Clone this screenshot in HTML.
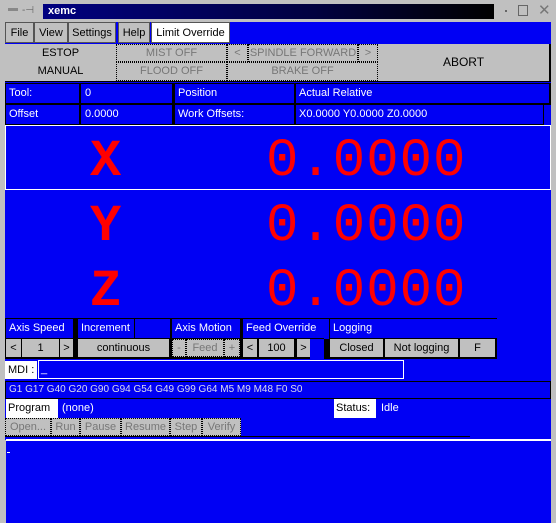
<!DOCTYPE html>
<html><head><style>
*{margin:0;padding:0;box-sizing:border-box}
body{width:556px;height:523px;background:#c0c0c0;position:relative;overflow:hidden;font-family:"Liberation Sans",sans-serif;font-size:11px}
.a{position:absolute;white-space:nowrap;overflow:hidden}
.b{background:#0000f4;color:#fff}
.g{background:#c0c0c0;color:#000;text-align:center}
.w{background:#fff;color:#000}
.d{border:1px dotted #000;color:#777}
.k{background:#000}
.m{font-family:"Liberation Mono",monospace;color:#f00;font-size:54px;line-height:54px;letter-spacing:1px}
.l{font-family:"Liberation Mono",monospace;font-weight:bold;color:#f00;font-size:52px;line-height:52px}
</style></head><body>
<div class="a" style="left:8px;top:8px;width:10px;height:3px;background:#888"></div>
<div class="a" style="left:22px;top:5px;font-size:10px;color:#666">-⊣</div>
<div class="a" style="left:43px;top:4px;width:451px;height:15px;background:linear-gradient(90deg,#000080,#000040 60%,#000);color:#fff;font-weight:bold;padding-left:5px;line-height:15px">xemc</div>
<div class="a" style="left:505px;top:10px;width:2px;height:2px;background:#666"></div>
<div class="a" style="left:518px;top:5px;width:10px;height:11px;border:1px solid #666"></div>
<div class="a" style="left:538px;top:1px;font-size:15px;color:#777">✕</div>

<div class="a b" style="left:5px;top:22px;width:546px;height:418px"></div>
<div class="a g" style="left:5px;top:22px;width:29px;height:21px;line-height:20px;border:1px solid #555">File</div>
<div class="a g" style="left:34px;top:22px;width:34px;height:21px;line-height:20px;border:1px solid #555">View</div>
<div class="a g" style="left:68px;top:22px;width:48px;height:21px;line-height:20px;border:1px solid #555">Settings</div>
<div class="a g" style="left:118px;top:22px;width:32px;height:21px;line-height:20px;border:1px solid #555">Help</div>
<div class="a w" style="left:151px;top:22px;width:79px;height:21px;line-height:20px;text-align:center;border:1px solid #555">Limit Override</div>

<div class="a k" style="left:5px;top:44px;width:546px;height:38px"></div>
<div class="a g" style="left:5px;top:44px;width:111px;height:18px;line-height:18px">ESTOP</div>
<div class="a g d" style="left:116px;top:44px;width:111px;height:18px;line-height:16px">MIST OFF</div>
<div class="a g d" style="left:227px;top:44px;width:21px;height:18px;line-height:16px">&lt;</div>
<div class="a g d" style="left:248px;top:44px;width:110px;height:18px;line-height:16px">SPINDLE FORWARD</div>
<div class="a g d" style="left:358px;top:44px;width:20px;height:18px;line-height:16px">&gt;</div>
<div class="a g" style="left:378px;top:44px;width:171px;height:37px;line-height:37px;font-size:12px">ABORT</div>
<div class="a g" style="left:5px;top:62px;width:111px;height:19px;line-height:19px">MANUAL</div>
<div class="a g d" style="left:116px;top:62px;width:111px;height:19px;line-height:17px">FLOOD OFF</div>
<div class="a g d" style="left:227px;top:62px;width:151px;height:19px;line-height:17px">BRAKE OFF</div>

<div class="a k" style="left:5px;top:83px;width:546px;height:42px"></div>
<div class="a b" style="left:6px;top:84px;width:73px;height:19px;line-height:19px;padding-left:3px">Tool:</div>
<div class="a b" style="left:81px;top:84px;width:91px;height:19px;line-height:19px;padding-left:4px">0</div>
<div class="a b" style="left:175px;top:84px;width:119px;height:19px;line-height:19px;padding-left:3px">Position</div>
<div class="a b" style="left:296px;top:84px;width:253px;height:19px;line-height:19px;padding-left:3px">Actual Relative</div>
<div class="a b" style="left:6px;top:105px;width:73px;height:19px;line-height:19px;padding-left:3px">Offset</div>
<div class="a b" style="left:81px;top:105px;width:91px;height:19px;line-height:19px;padding-left:4px">0.0000</div>
<div class="a b" style="left:175px;top:105px;width:119px;height:19px;line-height:19px;padding-left:3px">Work Offsets:</div>
<div class="a b" style="left:296px;top:105px;width:247px;height:19px;line-height:19px;padding-left:3px">X0.0000  Y0.0000  Z0.0000</div>
<div class="a b" style="left:544px;top:105px;width:7px;height:20px"></div>

<div class="a" style="left:5px;top:125px;width:546px;height:65px;border:1px solid #fff"></div>
<div class="a l" style="left:90px;top:136px">X</div>
<div class="a m" style="left:266px;top:135px">0.0000</div>
<div class="a l" style="left:90px;top:201px">Y</div>
<div class="a m" style="left:266px;top:200px">0.0000</div>
<div class="a l" style="left:90px;top:266px">Z</div>
<div class="a m" style="left:266px;top:265px">0.0000</div>

<div class="a k" style="left:5px;top:318px;width:492px;height:41px"></div>
<div class="a b" style="left:6px;top:319px;width:67px;height:19px;line-height:19px;padding-left:3px">Axis Speed</div>
<div class="a b" style="left:78px;top:319px;width:56px;height:19px;line-height:19px;padding-left:3px">Increment</div>
<div class="a b" style="left:135px;top:319px;width:35px;height:19px"></div>
<div class="a b" style="left:172px;top:319px;width:68px;height:19px;line-height:19px;padding-left:3px">Axis Motion</div>
<div class="a b" style="left:243px;top:319px;width:81px;height:19px;line-height:19px;padding-left:3px">Feed Override</div>
<div class="a b" style="left:324px;top:319px;width:5px;height:20px"></div>
<div class="a b" style="left:330px;top:319px;width:47px;height:19px;line-height:19px;padding-left:3px">Logging</div>
<div class="a b" style="left:377px;top:319px;width:120px;height:19px"></div>
<div class="a g" style="left:6px;top:339px;width:15px;height:18px;line-height:18px">&lt;</div>
<div class="a g" style="left:22px;top:339px;width:37px;height:18px;line-height:18px">1</div>
<div class="a g" style="left:60px;top:339px;width:13px;height:18px;line-height:18px">&gt;</div>
<div class="a g" style="left:78px;top:339px;width:91px;height:18px;line-height:18px">continuous</div>
<div class="a g d" style="left:172px;top:339px;width:14px;height:18px;line-height:16px">-</div>
<div class="a g d" style="left:186px;top:339px;width:38px;height:18px;line-height:16px">Feed</div>
<div class="a g d" style="left:224px;top:339px;width:16px;height:18px;line-height:16px">+</div>
<div class="a g" style="left:243px;top:339px;width:14px;height:18px;line-height:18px">&lt;</div>
<div class="a g" style="left:259px;top:339px;width:35px;height:18px;line-height:18px">100</div>
<div class="a g" style="left:297px;top:339px;width:13px;height:18px;line-height:18px">&gt;</div>
<div class="a b" style="left:310px;top:339px;width:14px;height:20px"></div>
<div class="a g" style="left:330px;top:339px;width:53px;height:18px;line-height:18px">Closed</div>
<div class="a g" style="left:385px;top:339px;width:73px;height:18px;line-height:18px">Not logging</div>
<div class="a g" style="left:460px;top:339px;width:35px;height:18px;line-height:18px">F</div>

<div class="a w" style="left:5px;top:361px;width:32px;height:18px;line-height:18px;padding-left:3px">MDI :</div>
<div class="a b" style="left:38px;top:360px;width:366px;height:19px;border:1px solid #fff;line-height:17px;padding-left:2px">_</div>

<div class="a b" style="left:5px;top:381px;width:546px;height:18px;border:1px solid #000;line-height:16px;padding-left:3px;font-size:10px;color:#dde">G1 G17 G40 G20 G90 G94 G54 G49 G99 G64 M5 M9 M48 F0 S0</div>

<div class="a w" style="left:6px;top:399px;width:52px;height:19px;line-height:19px;padding-left:2px">Program</div>
<div class="a b" style="left:62px;top:399px;width:200px;height:19px;line-height:19px">(none)</div>
<div class="a w" style="left:334px;top:399px;width:42px;height:19px;line-height:19px;padding-left:2px">Status:</div>
<div class="a b" style="left:381px;top:399px;width:50px;height:19px;line-height:19px">Idle</div>
<div class="a" style="left:5px;top:418px;width:465px;height:19px;border-bottom:1px solid #000"></div>
<div class="a g d" style="left:5px;top:418px;width:46px;height:18px;line-height:16px">Open...</div>
<div class="a g d" style="left:51px;top:418px;width:29px;height:18px;line-height:16px">Run</div>
<div class="a g d" style="left:80px;top:418px;width:41px;height:18px;line-height:16px">Pause</div>
<div class="a g d" style="left:121px;top:418px;width:49px;height:18px;line-height:16px">Resume</div>
<div class="a g d" style="left:170px;top:418px;width:32px;height:18px;line-height:16px">Step</div>
<div class="a g d" style="left:202px;top:418px;width:39px;height:18px;line-height:16px">Verify</div>

<div class="a b" style="left:6px;top:439px;width:545px;height:84px;border-top:2px solid #fff"></div>
<div class="a" style="left:7px;top:452px;width:3px;height:1px;background:#fff"></div>
</body></html>
